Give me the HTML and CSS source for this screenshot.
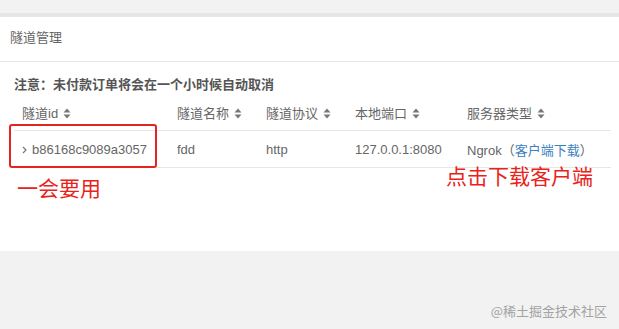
FILE: index.html
```html
<!DOCTYPE html>
<html>
<head lang="zh-CN">
    <meta charset="UTF-8">
    <title>隧道管理</title>
    <link rel="stylesheet" href="styles.css">
</head>
<body>
<div class="wrap">
    <section class="panel">
        <div class="panel-title">隧道管理</div>
        <div class="panel-body">
            <div class="notice">注意：未付款订单将会在一个小时候自动取消</div>
            <table class="tunnel">
                <colgroup>
                    <col class="c1"><col class="c2"><col class="c3"><col class="c4"><col>
                </colgroup>
                <thead>
                <tr>
                    <th>隧道id<svg class="sort" width="8" height="11" viewBox="0 0 8 11"><path d="M4 0.5L7.5 4.5H0.5Z M4 10.5L7.5 6.5H0.5Z" fill="#777"/></svg></th>
                    <th>隧道名称<svg class="sort" width="8" height="11" viewBox="0 0 8 11"><path d="M4 0.5L7.5 4.5H0.5Z M4 10.5L7.5 6.5H0.5Z" fill="#777"/></svg></th>
                    <th>隧道协议<svg class="sort" width="8" height="11" viewBox="0 0 8 11"><path d="M4 0.5L7.5 4.5H0.5Z M4 10.5L7.5 6.5H0.5Z" fill="#777"/></svg></th>
                    <th>本地端口<svg class="sort" width="8" height="11" viewBox="0 0 8 11"><path d="M4 0.5L7.5 4.5H0.5Z M4 10.5L7.5 6.5H0.5Z" fill="#777"/></svg></th>
                    <th>服务器类型<svg class="sort" width="8" height="11" viewBox="0 0 8 11"><path d="M4 0.5L7.5 4.5H0.5Z M4 10.5L7.5 6.5H0.5Z" fill="#777"/></svg></th>
                </tr>
                </thead>
                <tbody>
                <tr>
                    <td><svg class="expand" width="5" height="8" viewBox="0 0 5 8"><path d="M1 1L4 4L1 7" fill="none" stroke="#777" stroke-width="1.2"/></svg>b86168c9089a3057</td>
                    <td>fdd</td>
                    <td>http</td>
                    <td>127.0.0.1:8080</td>
                    <td>Ngrok<span class="paren">（</span><a class="download" href="#">客户端下载</a><span class="paren">）</span></td>
                </tr>
                </tbody>
            </table>
        </div>
        <div class="mark-box"></div>
        <div class="note note-left">一会要用</div>
        <div class="note note-right">点击下载客户端</div>
    </section>
    <div class="watermark">@稀土掘金技术社区</div>
</div>
</body>
</html>
```

FILE: styles.css
```css
body {
    margin: 0;
    background: #f2f2f2;
    font-family: "Liberation Sans", "Noto Sans CJK SC", sans-serif;
    color: #666;
}
.wrap {
    padding-top: 13px;
}
.panel {
    position: relative;
    height: 238px;
    background: #fff;
    border-top: 4px solid #e6e6e6;
    box-sizing: border-box;
}
.panel-title {
    height: 44px;
    line-height: 42px;
    padding-left: 10px;
    font-size: 13px;
    color: #666;
    border-bottom: 1px solid #e6e6e6;
}
.panel-body {
    padding: 13px 8px 0 14px;
}
.notice {
    font-size: 13px;
    line-height: 20px;
    font-weight: bold;
    color: #555;
}
.tunnel {
    width: 100%;
    border-collapse: collapse;
    table-layout: fixed;
    font-size: 13px;
}
.tunnel .c1 { width: 155px; }
.tunnel .c2 { width: 89px; }
.tunnel .c3 { width: 89px; }
.tunnel .c4 { width: 112px; }
.tunnel th {
    height: 35px;
    padding: 0 8px;
    text-align: left;
    font-weight: normal;
    color: #666;
    border-bottom: 1px solid #e6e6e6;
    white-space: nowrap;
}
.tunnel td {
    height: 36px;
    padding: 0 8px;
    color: #666;
    border-bottom: 1px solid #e6e6e6;
    white-space: nowrap;
}
.sort {
    margin-left: 5px;
    vertical-align: -1px;
}
.expand {
    margin-right: 5px;
    vertical-align: 0;
}
.paren {
    color: #666;
}
.download {
    color: #3b7fc0;
    text-decoration: none;
}
.mark-box {
    position: absolute;
    left: 9px;
    top: 107px;
    width: 148px;
    height: 44px;
    box-sizing: border-box;
    border: 2px solid #e3241f;
    border-radius: 3px;
}
.note {
    position: absolute;
    font-family: "Noto Sans CJK SC", sans-serif;
    font-size: 21px;
    line-height: 24px;
    color: #e8231c;
}
.note-left {
    left: 17px;
    top: 158px;
}
.note-right {
    left: 446px;
    top: 146px;
}
.watermark {
    padding: 50px 12px 0 0;
    text-align: right;
    font-family: "Noto Sans CJK SC", sans-serif;
    font-size: 13px;
    color: #a3a3a3;
}
```
